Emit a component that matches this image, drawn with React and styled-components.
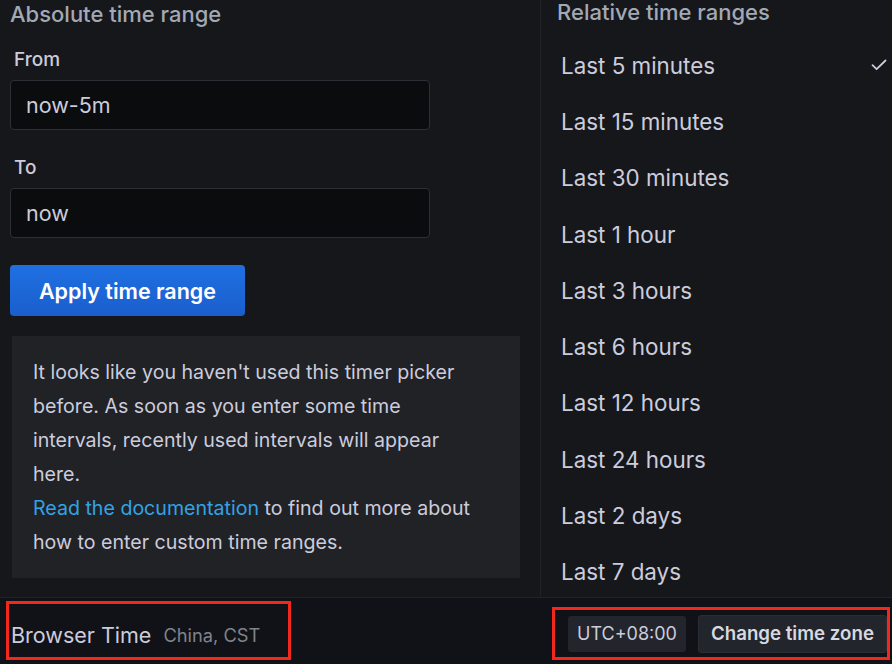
import React from 'react';
import styled, { createGlobalStyle } from 'styled-components';

const GlobalStyle = createGlobalStyle`
  html, body {
    margin: 0;
    padding: 0;
    background: #16171b;
  }
  body {
    font-family: Inter, Roboto, "Liberation Sans", sans-serif;
    color: #ccccdc;
  }
`;

const Picker = styled.div`
  width: 892px;
  height: 664px;
  display: flex;
  flex-direction: column;
  background: #16171b;
  overflow: hidden;
`;

const Body = styled.div`
  flex: 1;
  display: flex;
  min-height: 0;
`;

const LeftPane = styled.section`
  width: 541px;
  padding-left: 10px;
  box-sizing: border-box;
  border-right: 1px solid #202226;
  display: flex;
  flex-direction: column;
`;

const RightPane = styled.section`
  flex: 1;
  display: flex;
  flex-direction: column;
  overflow: hidden;
`;

const Heading = styled.h3`
  margin: ${p => (p.$shift ? '-2px 0 0 16px' : '0')};
  font-size: 22px;
  line-height: 28px;
  font-weight: 500;
  color: #a2a9b5;
  white-space: nowrap;
`;

const Label = styled.label`
  display: block;
  margin: ${p => p.$top}px 0 8px 4px;
  font-size: 19px;
  line-height: 24px;
  font-weight: 500;
  color: #ccccdc;
`;

const Input = styled.div`
  width: 420px;
  height: 50px;
  box-sizing: border-box;
  display: flex;
  align-items: center;
  padding-left: 15px;
  background: #0b0c0e;
  border: 1px solid #2c3036;
  border-radius: 4px;
  font-size: 21.5px;
  color: #ccccdc;
`;

const ApplyButton = styled.button`
  align-self: flex-start;
  margin-top: 27px;
  width: 235px;
  height: 51px;
  border: none;
  border-radius: 4px;
  background: linear-gradient(#1f70e2, #1a5ecd);
  color: #fff;
  font-family: inherit;
  font-size: 21.5px;
  font-weight: 600;
  white-space: nowrap;
`;

const InfoBox = styled.div`
  margin: 20px 0 0 2px;
  width: 508px;
  height: 242px;
  box-sizing: border-box;
  padding: 19px 10px 0 21px;
  background: #202226;
  font-size: 19.6px;
  line-height: 34px;
  color: #ccccdc;
  white-space: nowrap;
`;

const DocLink = styled.a`
  color: #33a2e5;
  text-decoration: none;
`;

const RangeList = styled.ul`
  list-style: none;
  margin: 11px 0 0;
  padding: 0 5px 0 20px;
`;

const RangeItem = styled.li`
  height: 56.3px;
  display: flex;
  align-items: center;
  justify-content: space-between;
  font-size: 22.4px;
  color: #ccccdc;
`;

const Footer = styled.footer`
  height: 67px;
  box-sizing: border-box;
  border-top: 1px solid #202226;
  background: #111217;
  display: flex;
  align-items: flex-start;
  justify-content: space-between;
  padding: 3px 2px 0 6px;
`;

const Marked = styled.div`
  border: 3px solid #f3281c;
  display: flex;
  align-items: center;
  box-sizing: border-box;
`;

const ZoneInfo = styled(Marked)`
  width: 285px;
  height: 59px;
  padding: 8px 0 0 2px;
  gap: 12px;
`;

const ZoneActions = styled(Marked)`
  width: 338px;
  height: 53px;
  margin-top: 6px;
  padding-left: 13px;
  gap: 12px;
`;

const ZoneName = styled.span`
  font-size: 21.5px;
  color: #ccccdc;
  white-space: nowrap;
`;

const ZoneDetail = styled.span`
  font-size: 18.3px;
  color: #7f848c;
  white-space: nowrap;
`;

const UtcBadge = styled.span`
  height: 36px;
  padding: 0 9px;
  display: flex;
  align-items: center;
  background: #22252b;
  border-radius: 3px;
  font-size: 18px;
  color: #ccccdc;
  white-space: nowrap;
`;

const ZoneButton = styled.button`
  height: 38px;
  padding: 0 12px;
  background: #22252b;
  border: 1px solid #2a2d33;
  border-radius: 3px;
  font-family: inherit;
  font-size: 18.7px;
  font-weight: 600;
  color: #d8d9e0;
  white-space: nowrap;
`;

const Check = () => (
  <svg width="16" height="12" viewBox="0 0 16 12" fill="none">
    <path d="M1.5 6.2 L5.6 10.2 L14.5 1.5" stroke="#ccccdc" strokeWidth="1.8" strokeLinecap="round" strokeLinejoin="round" />
  </svg>
);

const ranges = [
  'Last 5 minutes',
  'Last 15 minutes',
  'Last 30 minutes',
  'Last 1 hour',
  'Last 3 hours',
  'Last 6 hours',
  'Last 12 hours',
  'Last 24 hours',
  'Last 2 days',
  'Last 7 days',
  'Last 30 days',
];

const App = () => (
  <>
    <GlobalStyle />
    <Picker>
      <Body>
        <LeftPane>
          <Heading>Absolute time range</Heading>
          <Label $top={20}>From</Label>
          <Input>now-5m</Input>
          <Label $top={26}>To</Label>
          <Input>now</Input>
          <ApplyButton>Apply time range</ApplyButton>
          <InfoBox>
            It looks like you haven't used this timer picker
            <br />
            before. As soon as you enter some time
            <br />
            intervals, recently used intervals will appear
            <br />
            here.
            <br />
            <DocLink href="#">Read the documentation</DocLink> to find out more about
            <br />
            how to enter custom time ranges.
          </InfoBox>
        </LeftPane>
        <RightPane>
          <Heading $shift>Relative time ranges</Heading>
          <RangeList>
            {ranges.map((r, i) => (
              <RangeItem key={r}>
                {r}
                {i === 0 && <Check />}
              </RangeItem>
            ))}
          </RangeList>
        </RightPane>
      </Body>
      <Footer>
        <ZoneInfo>
          <ZoneName>Browser Time</ZoneName>
          <ZoneDetail>China, CST</ZoneDetail>
        </ZoneInfo>
        <ZoneActions>
          <UtcBadge>UTC+08:00</UtcBadge>
          <ZoneButton>Change time zone</ZoneButton>
        </ZoneActions>
      </Footer>
    </Picker>
  </>
);

export default App;
